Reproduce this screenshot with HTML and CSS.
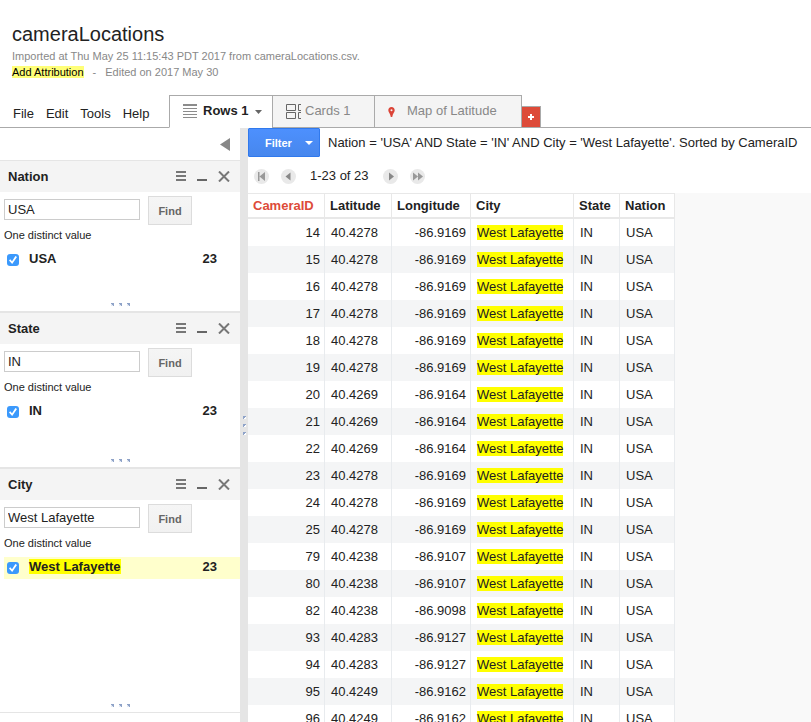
FILE: index.html
```html
<!DOCTYPE html>
<html lang="en">
<head>
<meta charset="utf-8">
<title>cameraLocations</title>
<link rel="stylesheet" href="styles.css">
</head>
<body>
<header class="header">
  <h1 class="title">cameraLocations</h1>
  <p class="meta">Imported at Thu May 25 11:15:43 PDT 2017 from cameraLocations.csv.</p>
  <p class="meta"><a class="attribution" href="#">Add Attribution</a><span class="dash">-</span>Edited on 2017 May 30</p>
</header>

<div class="bar">
  <nav class="menu">
    <button type="button">File</button>
    <button type="button">Edit</button>
    <button type="button">Tools</button>
    <button type="button">Help</button>
  </nav>
  <nav class="tabs">
    <a class="tab tab-rows" href="#">
      <svg width="14" height="15" viewBox="0 0 14 15" stroke="#8c8c8c"><path d="M0 1h14" stroke-width="2"/><path d="M0 4.500h14M0 7.500h14M0 10.500h14M0 13.500h14"/></svg>
      <span>Rows 1</span>
      <svg width="7" height="4" viewBox="0 0 7 4"><path d="M0 0h7L3.500 4z" fill="#666"/></svg>
    </a>
    <a class="tab tab-cards" href="#">
      <svg width="16" height="15" viewBox="0 0 16 15" fill="none" stroke="#666"><path d="M.5.5h9v6h-9zM.5 8.500h9v6h-9zM15 .5h-2.500v6H15M15 8.500h-2.500v6H15"/></svg>
      <span>Cards 1</span>
    </a>
    <a class="tab tab-map" href="#">
      <svg width="7" height="10" viewBox="0 0 7 10"><path fill="#db4437" fill-rule="evenodd" d="M3.500 0C1.500 0 .3 1.400.3 3.200.3 5.200 2.300 6.500 2.800 10h1.400C4.700 6.500 6.700 5.200 6.700 3.200 6.700 1.400 5.500 0 3.500 0zm0 2.200a1 1 0 1 1 0 2 1 1 0 0 1 0-2z"/></svg>
      <span>Map of Latitude</span>
    </a>
    <button type="button" class="add" aria-label="Add tab"><svg width="6" height="6" viewBox="0 0 6 6"><path d="M3 0v6M0 3h6" stroke="#fff" stroke-width="2"/></svg></button>
  </nav>
</div>

<div class="workspace">
  <aside class="sidebar">
    <div class="collapse"><button type="button" aria-label="Collapse"><svg width="10" height="13" viewBox="0 0 10 13"><path d="M10 0v13L0 6.500z" fill="#888"/></svg></button></div>

    <section class="facet">
      <div class="facet-head">
        <h2>Nation</h2>
        <button type="button" aria-label="Sort"><svg width="10" height="11" viewBox="0 0 10 11"><path d="M0 1h10M0 5h10M0 9h10" stroke="#777" stroke-width="2"/></svg></button>
        <button type="button" aria-label="Minimize"><svg width="10" height="11" viewBox="0 0 10 11"><path d="M0 9h10" stroke="#666" stroke-width="2"/></svg></button>
        <button type="button" aria-label="Close"><svg width="12" height="11" viewBox="0 0 12 11"><path d="M1 .5l10 10M11 .5l-10 10" stroke="#777" stroke-width="2"/></svg></button>
      </div>
      <div class="facet-body body-nation">
        <form class="find"><input type="text" aria-label="Find nation" value="USA"><button type="button">Find</button></form>
        <p class="distinct">One distinct value</p>
        <label class="value"><input type="checkbox" checked><span class="name">USA</span><span class="count">23</span></label>
        <div class="grip"><i></i><i></i><i></i></div>
      </div>
    </section>

    <section class="facet">
      <div class="facet-head">
        <h2>State</h2>
        <button type="button" aria-label="Sort"><svg width="10" height="11" viewBox="0 0 10 11"><path d="M0 1h10M0 5h10M0 9h10" stroke="#777" stroke-width="2"/></svg></button>
        <button type="button" aria-label="Minimize"><svg width="10" height="11" viewBox="0 0 10 11"><path d="M0 9h10" stroke="#666" stroke-width="2"/></svg></button>
        <button type="button" aria-label="Close"><svg width="12" height="11" viewBox="0 0 12 11"><path d="M1 .5l10 10M11 .5l-10 10" stroke="#777" stroke-width="2"/></svg></button>
      </div>
      <div class="facet-body body-state">
        <form class="find"><input type="text" aria-label="Find state" value="IN"><button type="button">Find</button></form>
        <p class="distinct">One distinct value</p>
        <label class="value"><input type="checkbox" checked><span class="name">IN</span><span class="count">23</span></label>
        <div class="grip"><i></i><i></i><i></i></div>
      </div>
    </section>

    <section class="facet">
      <div class="facet-head">
        <h2>City</h2>
        <button type="button" aria-label="Sort"><svg width="10" height="11" viewBox="0 0 10 11"><path d="M0 1h10M0 5h10M0 9h10" stroke="#777" stroke-width="2"/></svg></button>
        <button type="button" aria-label="Minimize"><svg width="10" height="11" viewBox="0 0 10 11"><path d="M0 9h10" stroke="#666" stroke-width="2"/></svg></button>
        <button type="button" aria-label="Close"><svg width="12" height="11" viewBox="0 0 12 11"><path d="M1 .5l10 10M11 .5l-10 10" stroke="#777" stroke-width="2"/></svg></button>
      </div>
      <div class="facet-body body-city">
        <form class="find"><input type="text" aria-label="Find city" value="West Lafayette"><button type="button">Find</button></form>
        <p class="distinct">One distinct value</p>
        <label class="value value-hover"><input type="checkbox" checked><span class="name"><mark>West Lafayette</mark></span><span class="count">23</span></label>
        <div class="grip"><i></i><i></i><i></i></div>
      </div>
    </section>
  </aside>

  <div class="splitter"><i></i><i></i><i></i></div>

  <main class="main">
    <div class="filter-row">
      <button type="button" class="filter">Filter<svg width="8" height="4" viewBox="0 0 8 4"><path d="M0 0h8L4 4z" fill="#fff"/></svg></button>
      <span class="query">Nation = 'USA' AND State = 'IN' AND City = 'West Lafayette'. Sorted by CameraID</span>
    </div>
    <div class="pager">
      <button type="button" aria-label="First page"><svg width="15" height="15" viewBox="0 0 15 15" fill="#999"><path d="M4 3h1.500v9H4zM11 3v9L5.500 7.500z"/></svg></button>
      <button type="button" aria-label="Previous page"><svg width="15" height="15" viewBox="0 0 15 15" fill="#888"><path d="M9.500 3.500v8l-5-4z"/></svg></button>
      <span class="range">1-23 of 23</span>
      <button type="button" aria-label="Next page"><svg width="15" height="15" viewBox="0 0 15 15" fill="#888"><path d="M6 3.500v8l5-4z"/></svg></button>
      <button type="button" aria-label="Last page"><svg width="15" height="15" viewBox="0 0 15 15" fill="#999"><path d="M3 3.500v8l5-4zM8 3.500v8l5-4z"/></svg></button>
    </div>
    <div class="scroll">
      <table class="grid">
        <colgroup><col class="c-id"><col class="c-lat"><col class="c-lng"><col class="c-city"><col class="c-state"><col class="c-nation"></colgroup>
        <thead><tr><th class="sorted">CameraID</th><th>Latitude</th><th>Longitude</th><th>City</th><th>State</th><th>Nation</th></tr></thead>
        <tbody>
          <tr><td>14</td><td>40.4278</td><td>-86.9169</td><td><mark>West Lafayette</mark></td><td>IN</td><td>USA</td></tr>
          <tr><td>15</td><td>40.4278</td><td>-86.9169</td><td><mark>West Lafayette</mark></td><td>IN</td><td>USA</td></tr>
          <tr><td>16</td><td>40.4278</td><td>-86.9169</td><td><mark>West Lafayette</mark></td><td>IN</td><td>USA</td></tr>
          <tr><td>17</td><td>40.4278</td><td>-86.9169</td><td><mark>West Lafayette</mark></td><td>IN</td><td>USA</td></tr>
          <tr><td>18</td><td>40.4278</td><td>-86.9169</td><td><mark>West Lafayette</mark></td><td>IN</td><td>USA</td></tr>
          <tr><td>19</td><td>40.4278</td><td>-86.9169</td><td><mark>West Lafayette</mark></td><td>IN</td><td>USA</td></tr>
          <tr><td>20</td><td>40.4269</td><td>-86.9164</td><td><mark>West Lafayette</mark></td><td>IN</td><td>USA</td></tr>
          <tr><td>21</td><td>40.4269</td><td>-86.9164</td><td><mark>West Lafayette</mark></td><td>IN</td><td>USA</td></tr>
          <tr><td>22</td><td>40.4269</td><td>-86.9164</td><td><mark>West Lafayette</mark></td><td>IN</td><td>USA</td></tr>
          <tr><td>23</td><td>40.4278</td><td>-86.9169</td><td><mark>West Lafayette</mark></td><td>IN</td><td>USA</td></tr>
          <tr><td>24</td><td>40.4278</td><td>-86.9169</td><td><mark>West Lafayette</mark></td><td>IN</td><td>USA</td></tr>
          <tr><td>25</td><td>40.4278</td><td>-86.9169</td><td><mark>West Lafayette</mark></td><td>IN</td><td>USA</td></tr>
          <tr><td>79</td><td>40.4238</td><td>-86.9107</td><td><mark>West Lafayette</mark></td><td>IN</td><td>USA</td></tr>
          <tr><td>80</td><td>40.4238</td><td>-86.9107</td><td><mark>West Lafayette</mark></td><td>IN</td><td>USA</td></tr>
          <tr><td>82</td><td>40.4238</td><td>-86.9098</td><td><mark>West Lafayette</mark></td><td>IN</td><td>USA</td></tr>
          <tr><td>93</td><td>40.4283</td><td>-86.9127</td><td><mark>West Lafayette</mark></td><td>IN</td><td>USA</td></tr>
          <tr><td>94</td><td>40.4283</td><td>-86.9127</td><td><mark>West Lafayette</mark></td><td>IN</td><td>USA</td></tr>
          <tr><td>95</td><td>40.4249</td><td>-86.9162</td><td><mark>West Lafayette</mark></td><td>IN</td><td>USA</td></tr>
          <tr><td>96</td><td>40.4249</td><td>-86.9162</td><td><mark>West Lafayette</mark></td><td>IN</td><td>USA</td></tr>
        </tbody>
      </table>
    </div>
  </main>
</div>
</body>
</html>
```
FILE: styles.css
```css
* { box-sizing: border-box; }

body {
  margin: 0;
  height: 100vh;
  display: flex;
  flex-direction: column;
  overflow: hidden;
  background: #fff;
  color: #222;
  font: 13px/16px "Liberation Sans", Arial, sans-serif;
}

h1, h2, p { margin: 0; }

button {
  margin: 0;
  padding: 0;
  border: 0;
  background: none;
  color: inherit;
  font: inherit;
}

a { color: inherit; text-decoration: none; }
svg { display: block; flex: none; }
mark { background: #ff0; color: inherit; }

.header { padding: 20px 12px 0; }
.title { font-size: 20px; line-height: 28px; font-weight: 400; }
.meta { font-size: 11px; line-height: 16px; color: #888; }
.attribution { background: #ffff78; color: #000; }
.dash { margin: 0 9px; }

.bar {
  display: flex;
  align-items: flex-end;
  margin-top: 15px;
  height: 33px;
  flex: none;
  box-shadow: inset 0 -1px #aaa;
}
.menu {
  display: flex;
  gap: 12px;
  width: 169px;
  padding: 0 0 6px 13px;
}
.tabs { display: flex; align-items: flex-end; }
.tab {
  display: flex;
  align-items: center;
  height: 33px;
  border: solid #aaa;
  border-width: 1px 0 1px 1px;
  background: #f4f4f4;
  color: #888;
}
.tab span { padding-bottom: 2px; }
.tab-rows {
  gap: 6px;
  width: 103px;
  padding-left: 13px;
  border-bottom-color: #fff;
  background: #fff;
  color: #222;
  font-weight: 700;
}
.tab-cards { gap: 3px; width: 102px; padding-left: 13px; }
.tab-map {
  gap: 12px;
  width: 148px;
  padding-left: 13px;
  border-right-width: 1px;
}
.add {
  display: flex;
  align-items: center;
  justify-content: center;
  width: 19px;
  height: 22px;
  border: solid #aaa;
  border-width: 1px 1px 1px 0;
  background: #dd4b39;
}

.workspace { display: flex; flex: 1; min-height: 0; }

.sidebar { width: 240px; flex: none; overflow: hidden; }
.collapse {
  display: flex;
  justify-content: flex-end;
  align-items: center;
  height: 33px;
  padding-right: 10px;
  border-bottom: 1px solid #e5e5e5;
}
.facet { border-bottom: 2px solid #e5e5e5; }
.facet:last-child { border-bottom-width: 1px; }
.facet-head {
  display: flex;
  align-items: center;
  gap: 11px;
  height: 31px;
  padding: 0 10px 0 8px;
  background: #f4f4f4;
}
.facet-head h2 { flex: 1; font-size: 13px; line-height: 16px; }
.facet-body { display: flex; flex-direction: column; padding-top: 4px; }
.body-nation { height: 119px; }
.body-state { height: 123px; }
.body-city { height: 212px; }

.find { display: flex; align-items: flex-start; gap: 8px; padding-left: 4px; }
.find input {
  width: 136px;
  height: 21px;
  margin: 3px 0 0;
  padding: 0 3px;
  border: 1px solid #ccc;
  border-radius: 0;
  background: #fff;
  color: #222;
  font: inherit;
}
.find button {
  width: 44px;
  height: 29px;
  border: 1px solid #dcdcdc;
  background: linear-gradient(#f5f5f5, #f1f1f1);
  color: #666;
  font-size: 11px;
  font-weight: 700;
}
.distinct { padding: 2px 4px; font-size: 11px; line-height: 16px; margin-bottom: 4px; }
.value {
  display: flex;
  align-items: center;
  height: 22px;
  margin-left: 4px;
  padding: 0 23px 0 3px;
  font-weight: 700;
}
.value-hover { background: #ffc; }
.value input {
  appearance: none;
  width: 12px;
  height: 12px;
  margin: 0 10px 0 0;
  border-radius: 3px;
  background: #3b99fc;
  display: grid;
  place-items: center;
}
.value input::before {
  content: "";
  width: 8px;
  height: 8px;
  background: #fff;
  clip-path: polygon(0 55%, 15% 40%, 38% 65%, 80% 0, 100% 12%, 40% 100%);
}
.name { flex: 1; padding-bottom: 3px; }
.count { padding-bottom: 3px; }

.grip { display: flex; justify-content: center; gap: 5px; margin-top: auto; padding-bottom: 5px; }
.grip i, .splitter i { width: 3px; height: 3px; }
.grip i { background: linear-gradient(225deg, #8fa3c8 60%, #e3e9f3 60%); }
.splitter {
  display: flex;
  flex-direction: column;
  align-items: center;
  justify-content: center;
  gap: 5px;
  width: 8px;
  flex: none;
  background: #e5e5e5;
}
.splitter i { background: linear-gradient(135deg, #8fa3c8 60%, #fff 60%); }

.main { display: flex; flex-direction: column; flex: 1; min-width: 0; }
.filter-row { display: flex; align-items: center; gap: 8px; height: 29px; flex: none; }
.filter {
  display: flex;
  align-items: center;
  gap: 13px;
  width: 72px;
  height: 29px;
  padding-left: 16px;
  flex: none;
  border: 1px solid #3079ed;
  border-radius: 1px;
  background: linear-gradient(#4d90fe, #4787ed);
  color: #fff;
  font-size: 11px;
  font-weight: 700;
}
.query { white-space: nowrap; }
.pager {
  display: flex;
  align-items: center;
  gap: 12px;
  height: 36px;
  padding: 2px 0 0 6px;
  flex: none;
}
.pager button { border-radius: 50%; background: #e9e9e9; }
.range { margin: 0 2px; }

.scroll { flex: 1; min-height: 0; overflow: hidden; background: #f9f9f9; }
.grid {
  width: 427px;
  table-layout: fixed;
  border-collapse: separate;
  border-spacing: 0;
  background: #fff;
}
.c-id { width: 77px; }
.c-lat { width: 67px; }
.c-lng { width: 79px; }
.c-city { width: 103px; }
.c-state { width: 46px; }
.c-nation { width: 55px; }
.grid th {
  height: 26px;
  padding: 0 0 0 5px;
  border: solid #e8e8e8;
  border-width: 1px 1px 2px 0;
  text-align: left;
  white-space: nowrap;
}
.grid .sorted { color: #dd4b39; }
.grid td {
  height: 27px;
  padding: 0 4px 0 6px;
  border-right: 1px solid #e8ebee;
  white-space: nowrap;
}
.grid td:nth-child(1), .grid td:nth-child(3) { text-align: right; }
.grid tbody tr:nth-child(even) { background: #f4f5f6; }
```
